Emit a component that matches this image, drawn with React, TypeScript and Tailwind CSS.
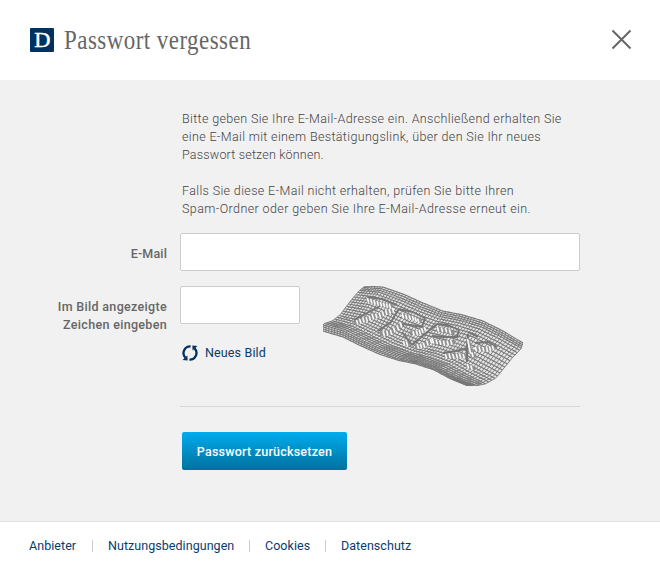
import React from "react";

type Pt = [number, number];

// Outline of the mesh, relative to its 200x100 box.
const top: Pt[] = [[42, 0], [60, 1], [80, 8], [100, 17], [120, 25], [140, 29], [160, 35], [180, 45], [200, 57]];
const bottom: Pt[] = [[0, 45], [20, 51], [38, 60], [56, 68], [74, 74], [93, 78], [111, 84], [128, 93], [145, 100]];
const left: Pt[] = [[42, 0], [36, 5], [29, 13], [23, 21], [17, 29], [9, 35], [0, 38], [0, 45]];
const right: Pt[] = [[200, 57], [198, 63], [190, 71], [181, 82], [173, 92], [162, 98], [152, 100], [145, 100]];

// Crests of the raised strokes.
const crests: Pt[][] = [
  [[44, 11], [59, 13], [74, 19]],
  [[57, 20], [44, 27], [31, 34]],
  [[75, 24], [68, 36], [55, 45]],
  [[75, 23], [90, 26], [102, 32], [99, 41], [87, 39], [79, 38]],
  [[79, 46], [89, 59]],
  [[114, 38], [102, 48], [89, 59]],
  [[114, 38], [125, 39], [136, 44], [134, 51], [120, 51], [109, 50]],
  [[145, 46], [155, 51]],
  [[120, 67], [133, 65], [145, 62]],
  [[152, 57], [165, 56], [174, 61]],
  [[145, 48], [144, 60], [144, 76]],
];

// Centre lines of the steep faces, where the cells are stretched.
const faces: Pt[][] = [
  [[45, 14], [58, 18], [70, 21]],
  [[70, 24], [50, 31], [31, 37]],
  [[78, 39], [68, 46], [57, 48]],
  [[80, 30], [90, 32], [98, 36]],
  [[102, 43], [94, 47], [87, 47]],
  [[81, 57], [87, 58]],
  [[108, 55], [101, 59], [92, 61]],
  [[115, 43], [123, 44], [131, 47]],
  [[110, 55], [121, 57], [132, 56]],
  [[123, 70], [134, 70], [144, 70]],
  [[153, 63], [164, 63], [173, 61]],
  [[145, 55], [147, 65], [152, 72]],
  [[145, 80], [152, 83]],
];

function at(points: Pt[], t: number): Pt {
  const n = points.length - 1;
  const i = Math.min(n - 1, Math.floor(t * n));
  const f = t * n - i;
  return [
    points[i][0] + (points[i + 1][0] - points[i][0]) * f,
    points[i][1] + (points[i + 1][1] - points[i][1]) * f,
  ];
}

function surface(u: number, v: number): Pt {
  const t = at(top, u);
  const b = at(bottom, u);
  const l = at(left, v);
  const r = at(right, v);
  const mix = (k: 0 | 1) =>
    (1 - v) * t[k] + v * b[k] + (1 - u) * l[k] + u * r[k] -
    ((1 - u) * (1 - v) * top[0][k] + u * (1 - v) * top[8][k] + (1 - u) * v * bottom[0][k] + u * v * bottom[8][k]);
  return [mix(0), mix(1)];
}

const line = (points: Pt[]) => "M" + points.map((p) => p[0].toFixed(1) + " " + p[1].toFixed(1)).join("L");

const COLS = 56;
const ROWS = 24;
const range = (n: number) => Array.from({ length: n + 1 }, (_, i) => i);
const rows = range(ROWS).map((j) => line(range(COLS).map((i) => surface(i / COLS, j / ROWS))));
const cols = range(COLS).map((i) => line(range(ROWS).map((j) => surface(i / COLS, j / ROWS))));
const outline = line([...top, ...right, ...[...bottom].reverse(), ...[...left].reverse()]) + "Z";

const ticks = faces.map((face) => {
  let d = "";
  for (let s = 1; s < face.length; s++) {
    const [a, b] = [face[s - 1], face[s]];
    const n = Math.max(1, Math.round(Math.hypot(b[0] - a[0], b[1] - a[1]) / 3.5));
    for (let i = 0; i < n; i++) {
      const x = a[0] + ((b[0] - a[0]) * i) / n;
      const y = a[1] + ((b[1] - a[1]) * i) / n;
      d += line([[x - 0.5, y - 1.5], [x + 0.5, y + 1.9]]);
    }
  }
  return d;
});

function Mesh() {
  return (
    <svg width="200" height="100" viewBox="0 0 200 100" className="block" fill="none" stroke="#777" strokeLinejoin="round">
      <path d={outline} fill="#e4e4e4" stroke="none" />
      <path d={rows.join("")} strokeWidth="1.1" />
      <path d={cols.join("")} strokeWidth="0.9" />
      <path d={faces.map(line).join("")} strokeWidth="4.5" stroke="#8f8f8f" />
      <path d={crests.map(line).join("")} strokeWidth="1.9" stroke="#757575" />
      <path d={ticks.join("")} strokeWidth="1.7" stroke="#f8f8f8" strokeLinecap="round" />
    </svg>
  );
}

function Logo() {
  return (
    <div className="flex h-6 w-6 items-center justify-center rounded-[1px] bg-[#00325f] text-white">
      <span className="block scale-x-[1.12] font-['Liberation_Serif',serif] text-[20px] leading-6 [-webkit-text-stroke:0.4px_white]">D</span>
    </div>
  );
}

function Refresh() {
  return (
    <svg width="16" height="16" viewBox="0 0 16 16" fill="none" stroke="#00325f" strokeWidth="2.3">
      <path d="M8.6 1.3A6.7 6.7 0 0 0 3.4 12.6" />
      <path d="M7.4 14.7A6.7 6.7 0 0 0 12.6 3.4" />
      <path d="M0.6 15L5.4 10.4L5.6 15.6Z" fill="#00325f" stroke="none" />
      <path d="M15.4 1L10.6 5.6L10.4 0.4Z" fill="#00325f" stroke="none" />
    </svg>
  );
}

export default function App() {
  return (
    <div className="flex h-[570px] w-[660px] flex-col overflow-hidden bg-white font-['Roboto','Liberation_Sans',sans-serif] text-[12.5px] leading-[18px] text-[#666]">
      <header className="flex h-20 shrink-0 items-start justify-between pl-[30px] pr-7 pt-7">
        <div className="flex gap-[10px]">
          <Logo />
          <h1 className="origin-left scale-x-[0.85] whitespace-nowrap font-['Liberation_Serif',serif] text-[27px] leading-6 tracking-[0.55px]">Passwort vergessen</h1>
        </div>
        <button aria-label="Schließen" className="mt-[1px]">
          <svg width="21" height="21" viewBox="0 0 21 21" stroke="#666" strokeWidth="2"><path d="M1.5 1.5L19.5 19.5M19.5 1.5L1.5 19.5" /></svg>
        </button>
      </header>

      <main className="h-[441px] shrink-0 bg-[#f1f1f1] pt-[30px]">
        <div className="ml-[182px] whitespace-nowrap font-light text-[#444]">
          <p className="tracking-[0.35px]">Bitte geben Sie Ihre E-Mail-Adresse ein. Anschließend erhalten Sie<br />eine E-Mail mit einem Bestätigungslink, über den Sie Ihr neues<br /><span className="tracking-[0.19px]">Passwort setzen können.</span></p>
          <p className="mt-[18px] tracking-[0.36px]">Falls Sie diese E-Mail nicht erhalten, prüfen Sie bitte Ihren<br /><span className="tracking-[0.4px]">Spam-Ordner oder geben Sie Ihre E-Mail-Adresse erneut ein.</span></p>
        </div>
        <div className="mt-[15px] flex">
          <label htmlFor="mail" className="mr-[13px] w-[167px] pt-3 text-right font-medium tracking-[0.15px]">E-Mail</label>
          <input id="mail" className="h-[38px] w-[400px] rounded-[2px] border border-[#ccc] bg-white" />
        </div>
        <div className="mt-[15px] flex">
          <label htmlFor="code" className="mr-[13px] w-[167px] pt-3 text-right font-medium tracking-[0.32px]">Im Bild angezeigte<br />Zeichen eingeben</label>
          <div className="w-[143px]">
            <input id="code" className="block h-[38px] w-[120px] rounded-[2px] border border-[#ccc] bg-white" />
            <a className="ml-[2px] mt-5 flex items-center gap-[7px] tracking-[0.14px] text-[#0a3c6c]"><Refresh />Neues Bild</a>
          </div>
          <Mesh />
        </div>
        <div className="ml-[180px] mt-5 w-[400px] border-t border-[#d7d7d7] pl-[2px] pt-[25px]">
          <button className="block h-[38px] w-[165px] whitespace-nowrap rounded-[2px] bg-linear-to-b from-[#00adef] to-[#00719e] pt-[1px] font-medium tracking-[0.22px] text-white">Passwort zurücksetzen</button>
        </div>
      </main>

      <footer className="flex h-[49px] items-center border-t border-[#e3e3e3] pl-[29px] tracking-[0.05px] text-[#0a3c6c]">
        <a className="w-12">Anbieter</a><i className="mx-[15px] h-3 w-px bg-[#ccc]" />
        <a className="w-[126px]">Nutzungsbedingungen</a><i className="mx-[15px] h-3 w-px bg-[#ccc]" />
        <a className="w-[45px]">Cookies</a><i className="mx-[15px] h-3 w-px bg-[#ccc]" />
        <a>Datenschutz</a>
      </footer>
    </div>
  );
}
